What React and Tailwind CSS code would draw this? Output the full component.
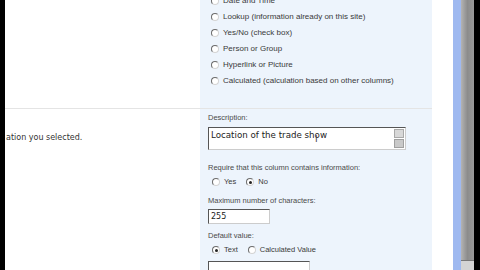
import React from 'react';

const Radio = ({ checked }) => (
  <span className="relative inline-block w-[8px] h-[8px] rounded-full border border-t-[#6b6b6b] border-l-[#6b6b6b] border-r-[#d4d4d4] border-b-[#d4d4d4] bg-white shrink-0">
    {checked && <span className="absolute left-[1.5px] top-[1.5px] w-[3px] h-[3px] rounded-full bg-[#222]" />}
  </span>
);

const Option = ({ label, checked }) => (
  <div className="flex items-center gap-[4px] h-[16px]">
    <Radio checked={checked} />
    <span>{label}</span>
  </div>
);

const types = [
  'Date and Time',
  'Lookup (information already on this site)',
  'Yes/No (check box)',
  'Person or Group',
  'Hyperlink or Picture',
  'Calculated (calculation based on other columns)',
];

const App = () => {
  return (
    <div className="w-[480px] h-[270px] overflow-hidden flex bg-white">
      <div className="w-[5px] bg-black shrink-0" />

      {/* page content */}
      <div className="w-[427px] flex flex-col overflow-hidden">
        {/* top row: column type choices */}
        <div className="h-[109px] shrink-0 flex border-b border-[#e4e4e4]">
          <div className="w-[195px] bg-white" />
          <div className="flex-1 bg-[#edf4fc] overflow-hidden">
            <div className="mt-[-7px] pl-[11px] text-[8px] text-[#3a3a3a]" style={{ fontFamily: '"Liberation Sans", Arial, sans-serif' }}>
              {types.map((t) => (
                <Option key={t} label={t} />
              ))}
            </div>
          </div>
        </div>

        {/* bottom row: additional settings */}
        <div className="flex-1 flex min-h-0">
          <div className="w-[195px] bg-white pt-[23px] pl-[1px] text-[8px] text-[#333]" style={{ fontFamily: '"DejaVu Sans", Verdana, sans-serif' }}>
            ation you selected.
          </div>
          <div className="flex-1 bg-[#edf4fc] pl-[8px] pt-[4px] text-[7.5px] text-[#4a4a4a]" style={{ fontFamily: '"Liberation Sans", Arial, sans-serif' }}>
            <div className="h-[10px] leading-[10px]">Description:</div>
            <div className="mt-[4px] w-[198px] h-[23px] flex bg-white border border-t-[#555] border-l-[#555] border-r-[#ccc] border-b-[#ccc]">
              <div className="relative flex-1 pl-[2px] pt-[1px] text-[8.7px] text-[#222]" style={{ fontFamily: '"DejaVu Sans", Verdana, sans-serif' }}>
                Location of the trade show
                <span className="absolute left-[106px] top-[5px] text-[9px] text-[#444]">I</span>
              </div>
              <div className="w-[10px] mr-[1px] flex flex-col justify-between py-[1px]">
                <div className="h-[9px] bg-[#d8d8d8] border border-[#a9a9a9]" />
                <div className="h-[9px] bg-[#c9c9c9] border border-[#a0a0a0]" />
              </div>
            </div>
            <div className="mt-[13px] h-[10px] leading-[10px]">Require that this column contains information:</div>
            <div className="flex items-center gap-[10px] pl-[4px] mt-[1px] text-[#3a3a3a]">
              <Option label="Yes" />
              <Option label="No" checked />
            </div>
            <div className="mt-[6px] h-[10px] leading-[10px]">Maximum number of characters:</div>
            <div className="mt-[3px] w-[62px] h-[15px] bg-white border border-t-[#555] border-l-[#555] border-r-[#ccc] border-b-[#ccc] pl-[2px] text-[8px] leading-[13px] text-[#222]" style={{ fontFamily: '"DejaVu Sans", Verdana, sans-serif' }}>
              255
            </div>
            <div className="mt-[7px] h-[10px] leading-[10px]">Default value:</div>
            <div className="flex items-center gap-[10px] pl-[4px] mt-[1px] text-[#3a3a3a]">
              <Option label="Text" checked />
              <Option label="Calculated Value" />
            </div>
            <div className="mt-[3px] w-[102px] h-[20px] bg-white border border-t-[#555] border-l-[#555] border-r-[#ccc] border-b-[#ccc]" />
          </div>
        </div>
      </div>

      {/* window edge and scrollbar */}
      <div className="w-[21px] bg-white shrink-0" />
      <div className="w-[8px] bg-[#9fb9f0] shrink-0" />
      <div className="w-[13px] shrink-0 flex flex-col bg-gradient-to-r from-[#b4b4b4] via-[#8c8c8c] to-[#9a9a9a]">
        <div className="flex-1" />
        <div className="h-[10px] bg-[#d4d4d4] border-t border-[#777]" />
      </div>
      <div className="w-[6px] bg-black shrink-0" />
    </div>
  );
};

export default App;
